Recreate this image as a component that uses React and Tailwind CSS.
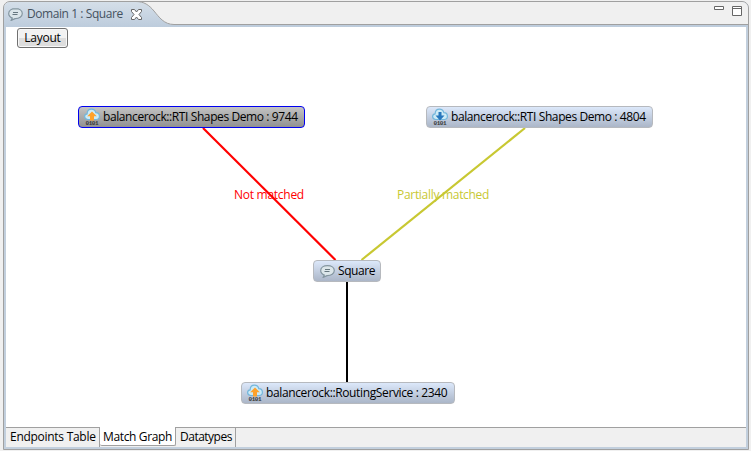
import React from "react";

function Bubble() {
  return (
    <svg width="15" height="13" viewBox="0 0 15 13" className="shrink-0">
      <path
        d="M7.500.700C3.600.700.700 2.700.700 5.600c0 2.200 1.400 3.700 3.600 4.500L3.200 12.400 7 10.600c4.200.1 7.300-2 7.300-5C14.300 2.700 11.400.700 7.500.700Z"
        fill="#dce6ea"
        stroke="#8496a0"
        strokeWidth="1.200"
      />
      <path d="M5 4.500h5M4.500 6.500h5" stroke="#66777f" strokeWidth="1" />
    </svg>
  );
}

function Cloud({ down }) {
  return (
    <svg width="16" height="18" viewBox="0 0 16 18" className="shrink-0 overflow-visible">
      <path
        d="M3.700 11.500C1.700 11.300.600 10.200.600 8.600c0-1.500 1-2.500 2.500-2.700C3.200 3 5 1.200 7.500 1.200c2.200 0 3.800 1.300 4.300 3.500 2.200.1 3.600 1.500 3.600 3.500s-1.300 3.200-3.200 3.300Z"
        fill="#cdebf6"
        stroke="#74b7dc"
        strokeWidth="1.200"
      />
      {down ? (
        <path d="M6.500 4h3v3.500h3L8 12.500 3.500 7.500h3Z" fill="#2877bd" />
      ) : (
        <path d="M8 3.500 12.800 8.300H10v4.200H6V8.300H3.200Z" fill="#ffa22b" />
      )}
      <text
        x="1.500"
        y="17.300"
        textLength="13"
        className="fill-[#383838] font-['Liberation_Mono',monospace] text-[6px] font-bold"
      >
        0101
      </text>
    </svg>
  );
}

function Node({ className, children }) {
  return (
    <div
      className={`absolute flex h-[22px] items-center whitespace-nowrap rounded-[4px] border ${className}`}
    >
      {children}
    </div>
  );
}

const plain = "border-[#b6b9be] bg-linear-to-b from-[#dce8fa] to-[#abb6c8]";

export default function App() {
  return (
    <div className="h-[451px] w-[751px] overflow-hidden bg-[#f0f0f0] pl-[3px] pt-px font-['Open_Sans','Noto_Sans',sans-serif] text-[12px] leading-[16px] text-black">
      <div className="flex h-[449px] w-[746px] flex-col overflow-hidden rounded-t-[7px] border border-[#a0a0a0] bg-[#c2cfdd]">
        <header className="relative flex h-[25px] shrink-0 bg-[#f0f0f0]">
          <svg className="absolute -left-px -top-px" width="746" height="26" viewBox="0 0 746 26">
            <defs>
              <linearGradient id="tab" x2="0" y2="1">
                <stop stopColor="#d5dfe9" />
                <stop offset="1" stopColor="#bdccdc" />
              </linearGradient>
            </defs>
            <path
              d="M.5 26V7Q.5 .5 7 .5H133C141 .5 146 4 151 10S161 23.500 171 23.500H745.500V26Z"
              fill="url(#tab)"
            />
            <path d="M133 .5C141 .5 146 4 151 10S161 23.500 171 23.500H745.500" fill="none" stroke="#a0a0a0" />
            <path d="M.5 26V7Q.5 .5 7 .5" fill="none" stroke="#a0a0a0" />
          </svg>
          <div className="relative flex h-[24px] items-center pl-[4px] text-[#45525f]">
            <Bubble />
            <span className="ml-[4px] w-[102px] whitespace-nowrap tracking-[-0.43px]">Domain 1 : Square</span>
            <svg width="11" height="11" viewBox="0 0 11 11" className="ml-[2px]">
              <path
                d="M.5.500h3l2 2.500 2-2.500h3v2L8 5.500l2.500 3v2h-3l-2-2.500-2 2.500h-3v-2L3 5.500.500 2.500Z"
                fill="#fff"
                stroke="#666"
              />
            </svg>
          </div>
          <svg className="relative ml-auto mr-[6px] mt-[4px]" width="28" height="10" viewBox="0 0 28 10">
            <g fill="#fff" stroke="#666">
              <path d="M.5.500h9v3h-9ZM18.500.500h9v9h-9Z" />
              <path d="M18.500 2.500h9" />
            </g>
          </svg>
        </header>
        <main className="relative mx-[2px] h-[400px] shrink-0 bg-white">
          <button className="ml-[11px] mt-px flex h-[20px] w-[51px] items-center justify-center rounded-[3px] border border-[#707070] bg-linear-to-b from-[#f2f2f2] from-50% to-[#dddddd] to-50% tracking-[-0.25px] shadow-[inset_0_0_0_1px_#f8f8f8]">
            Layout
          </button>
          <div className="absolute left-[228px] top-[160px] whitespace-nowrap tracking-[-0.27px] text-[#ff0000]">Not matched</div>
          <div className="absolute left-[391px] top-[160px] whitespace-nowrap tracking-[-0.3px] text-[#c8c832]">Partially matched</div>
          <svg className="absolute left-0 top-0" width="741" height="400" viewBox="6 27 741 400" fill="none" strokeWidth="2.200">
            <path d="M203 128 335.500 260" stroke="#f00" />
            <path d="M525 128 361.500 260" stroke="#c8c832" />
            <path d="M347 281V382" stroke="#000" strokeWidth="2" />
          </svg>
          <Node className="left-[72px] top-[79px] w-[227px] border-[#0000f0] bg-linear-to-b from-[#c4c4c4] to-[#919191] pl-[5px]">
            <Cloud />
            <span className="ml-[3px] tracking-[-0.4px]">balancerock::RTI Shapes Demo : 9744</span>
          </Node>
          <Node className={`left-[420px] top-[79px] w-[227px] pl-[5px] ${plain}`}>
            <Cloud down />
            <span className="ml-[3px] tracking-[-0.4px]">balancerock::RTI Shapes Demo : 4804</span>
          </Node>
          <Node className={`left-[307px] top-[233px] w-[68px] pl-[6px] ${plain}`}>
            <Bubble />
            <span className="ml-[3px] tracking-[-0.4px]">Square</span>
          </Node>
          <Node className={`left-[235px] top-[355px] w-[214px] pl-[5px] ${plain}`}>
            <Cloud />
            <span className="ml-[3px] tracking-[-0.37px]">balancerock::RoutingService : 2340</span>
          </Node>
        </main>
        <footer className="mx-[2px] flex h-[20px] shrink-0 bg-[#f0f0f0]">
          <div className="h-[20px] w-[94px] whitespace-nowrap border-r border-t border-[#a0a0a0] pl-[4px] pt-px tracking-[-0.28px]">Endpoints Table</div>
          <div className="h-[19px] w-[76px] whitespace-nowrap rounded-b-[2px] border-b border-r border-[#a0a0a0] bg-white pl-[3px] pt-[2px] tracking-[-0.35px]">Match Graph</div>
          <div className="h-[20px] w-[60px] whitespace-nowrap border-r border-t border-[#a0a0a0] pl-[4px] pt-px tracking-[-0.5px]">Datatypes</div>
          <div className="flex-1 border-t border-[#a0a0a0]" />
        </footer>
      </div>
    </div>
  );
}
